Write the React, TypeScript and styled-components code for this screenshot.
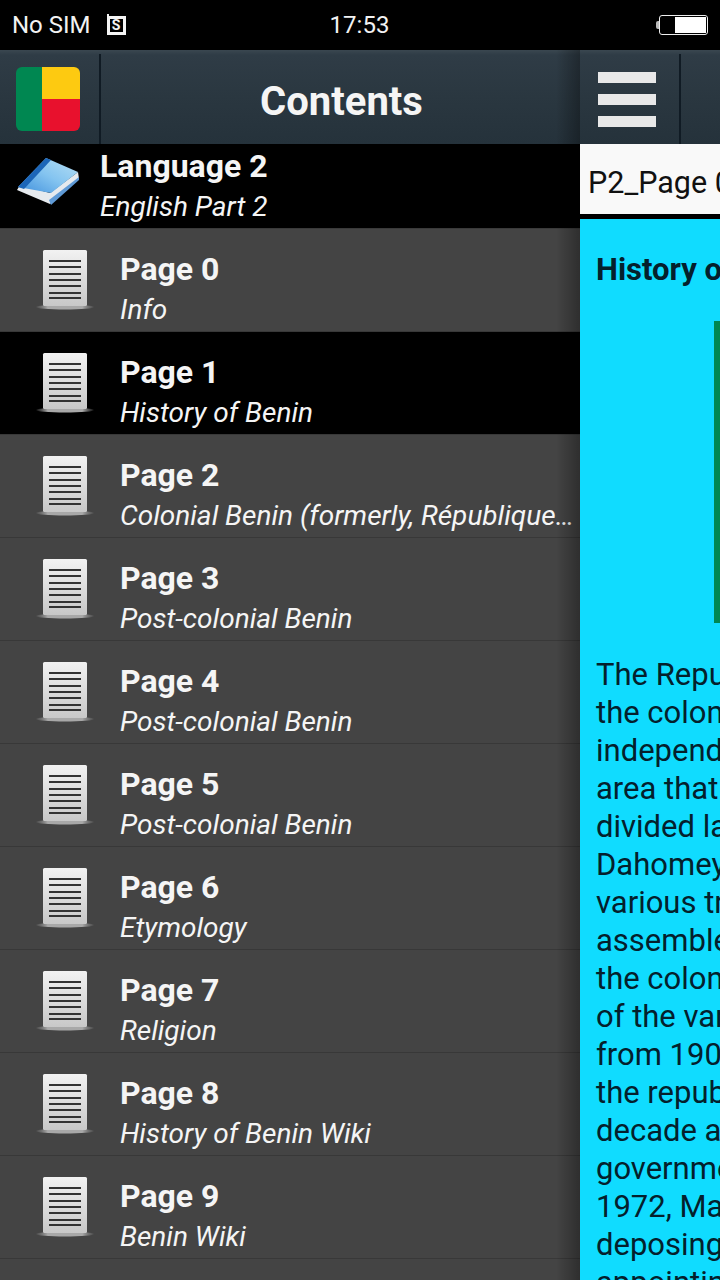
import React from 'react';
import styled, { createGlobalStyle } from 'styled-components';

const PAGES = [
  { title: 'Page 0', sub: 'Info' },
  { title: 'Page 1', sub: 'History of Benin', active: true },
  { title: 'Page 2', sub: 'Colonial Benin (formerly, République du Dahomey)' },
  { title: 'Page 3', sub: 'Post-colonial Benin' },
  { title: 'Page 4', sub: 'Post-colonial Benin' },
  { title: 'Page 5', sub: 'Post-colonial Benin' },
  { title: 'Page 6', sub: 'Etymology' },
  { title: 'Page 7', sub: 'Religion' },
  { title: 'Page 8', sub: 'History of Benin Wiki' },
  { title: 'Page 9', sub: 'Benin Wiki' },
];

const ARTICLE_LINES = [
  'The Republic of Benin',
  'the colonial era and',
  'independence of the',
  'area that is now',
  'divided lands of',
  'Dahomey and the',
  'various tribes were',
  'assembled during',
  'the colonial period',
  'of the various areas',
  'from 1904 until',
  'the republic in the',
  'decade after the',
  'government until',
  '1972, Mathieu Kerekou',
  'deposing the rulers',
  'appointing himself',
];

const DocIcon = () => (
  <svg width="58" height="60" viewBox="0 0 58 60">
    <defs>
      <linearGradient id="docPaper" x1="0" y1="0" x2="0" y2="1">
        <stop offset="0" stopColor="#f2f2f2" />
        <stop offset="1" stopColor="#c8c8c8" />
      </linearGradient>
      <linearGradient id="docShadow" x1="0" y1="0" x2="1" y2="0">
        <stop offset="0" stopColor="#8a8a8a" stopOpacity="0.1" />
        <stop offset="0.2" stopColor="#a8a8a8" />
        <stop offset="0.8" stopColor="#a8a8a8" />
        <stop offset="1" stopColor="#8a8a8a" stopOpacity="0.1" />
      </linearGradient>
    </defs>
    <ellipse cx="29" cy="57" rx="29" ry="2.5" fill="url(#docShadow)" />
    <rect x="7" y="0" width="44" height="56" rx="1.5" fill="url(#docPaper)" />
    {[10, 16, 23, 29, 35, 42, 47].map(y => (
      <rect key={y} x="13" y={y} width="32" height="2" fill="#333" />
    ))}
  </svg>
);

const BookIcon = () => (
  <svg width="64" height="50" viewBox="0 0 64 50">
    <defs>
      <linearGradient id="bookCover" x1="0" y1="1" x2="1" y2="0">
        <stop offset="0" stopColor="#3f8fdc" />
        <stop offset="0.5" stopColor="#84c4f0" />
        <stop offset="1" stopColor="#b8e0f4" />
      </linearGradient>
    </defs>
    <path d="M0 33 L33 47 L62 22 L61 15 L33 36 L3 28 Z" fill="#e6eaee" />
    <path d="M32 43 L62 20 L62 23 L34 48 Z" fill="#5f9ad6" />
    <path d="M1 30 L29 1 L61 15 L34 36 Z" fill="url(#bookCover)" />
    <path d="M1 30 L29 1 L34 3 L7 32 Z" fill="#1c66b8" />
  </svg>
);

const FlagIcon = () => (
  <FlagFrame>
    <FlagHoist />
    <FlagFly>
      <FlagStripe $color="#fdca11" />
      <FlagStripe $color="#e8112d" />
    </FlagFly>
  </FlagFrame>
);

export default function App() {
  return (
    <Screen>
      <GlobalStyle />
      <StatusBar>
        <Carrier>
          No SIM
          <SimBadge>S</SimBadge>
        </Carrier>
        <Clock>17:53</Clock>
        <Battery>
          <BatteryLevel />
        </Battery>
      </StatusBar>
      <Body>
        <Drawer>
          <DrawerHeader>
            <FlagCell>
              <FlagIcon />
            </FlagCell>
            <DrawerTitle>Contents</DrawerTitle>
          </DrawerHeader>
          <LanguageRow>
            <LanguageIcon>
              <BookIcon />
            </LanguageIcon>
            <RowText>
              <RowTitle>Language 2</RowTitle>
              <RowSub>English Part 2</RowSub>
            </RowText>
          </LanguageRow>
          {PAGES.map(page => (
            <PageRow key={page.title} $active={page.active}>
              <PageIcon>
                <DocIcon />
              </PageIcon>
              <PageText>
                <RowTitle>{page.title}</RowTitle>
                <RowSub>{page.sub}</RowSub>
              </PageText>
            </PageRow>
          ))}
          <DrawerEdge />
        </Drawer>
        <Main>
          <MainHeader>
            <MenuCell>
              <MenuBar />
              <MenuBar />
              <MenuBar />
            </MenuCell>
          </MainHeader>
          <TabStrip>P2_Page 0</TabStrip>
          <Article>
            <ArticleHeading>History of Benin</ArticleHeading>
            <ArticleImage />
            <ArticleText>
              {ARTICLE_LINES.map(line => (
                <ArticleLine key={line}>{line}</ArticleLine>
              ))}
            </ArticleText>
          </Article>
        </Main>
      </Body>
    </Screen>
  );
}

const GlobalStyle = createGlobalStyle`
  html, body {
    margin: 0;
    padding: 0;
    background: #000;
  }
  * {
    box-sizing: border-box;
  }
`;

const Screen = styled.div`
  width: 720px;
  height: 1280px;
  overflow: hidden;
  display: flex;
  flex-direction: column;
  background: #000;
  font-family: Roboto, 'Liberation Sans', sans-serif;
  color: #fff;
`;

const StatusBar = styled.div`
  height: 50px;
  flex: none;
  display: grid;
  grid-template-columns: 1fr auto 1fr;
  align-items: center;
  padding: 0 12px;
  background: #000;
  font-size: 24px;
  color: #f2f2f2;
`;

const Carrier = styled.div`
  display: flex;
  align-items: center;
  gap: 16px;
`;

const SimBadge = styled.span`
  position: relative;
  width: 19px;
  height: 19px;
  border: 3px solid #f4f4f4;
  font-size: 14px;
  font-weight: 700;
  line-height: 13px;
  text-align: center;

  &::before {
    content: '';
    position: absolute;
    top: -5px;
    left: -3px;
    width: 2px;
    height: 3px;
    background: #f4f4f4;
  }
`;

const Clock = styled.div`
  text-align: center;
  margin-left: -1px;
`;

const Battery = styled.div`
  position: relative;
  justify-self: end;
  width: 49px;
  height: 20px;
  border: 1px solid #eee;
  border-radius: 3px;
  display: flex;
  justify-content: flex-end;
  padding: 1px;

  &::before {
    content: '';
    position: absolute;
    top: 5px;
    left: -4px;
    width: 3px;
    height: 8px;
    border-radius: 2px 0 0 2px;
    background: #bbb;
  }
`;

const BatteryLevel = styled.div`
  width: 31px;
  background: #fff;
`;

const Body = styled.div`
  flex: 1;
  display: flex;
  min-height: 0;
`;

const Drawer = styled.div`
  position: relative;
  width: 580px;
  flex: none;
  background: #444;
  overflow: hidden;
`;

const DrawerEdge = styled.div`
  position: absolute;
  top: 0;
  right: 0;
  bottom: 0;
  width: 24px;
  background: linear-gradient(to right, rgba(0, 0, 0, 0), rgba(0, 0, 0, 0.32));
`;

const barBackground = 'linear-gradient(to bottom, #3a4750 0, #2f3c46 5px, #2a3740 50%, #25323b 100%)';

const DrawerHeader = styled.div`
  height: 94px;
  display: flex;
  align-items: stretch;
  background: ${barBackground};
`;

const FlagCell = styled.div`
  width: 101px;
  flex: none;
  display: flex;
  align-items: center;
  padding-left: 16px;
  margin-top: 4px;
  border-right: 2px solid #101b24;
`;

const FlagFrame = styled.div`
  width: 64px;
  height: 64px;
  display: flex;
  border-radius: 6px;
  overflow: hidden;
`;

const FlagHoist = styled.div`
  width: 26px;
  background: #008751;
`;

const FlagFly = styled.div`
  flex: 1;
  display: flex;
  flex-direction: column;
`;

const FlagStripe = styled.div<{ $color: string }>`
  flex: 1;
  background: ${({ $color }) => $color};
`;

const DrawerTitle = styled.div`
  flex: 1;
  display: flex;
  align-items: center;
  justify-content: center;
  padding: 8px 0 0 2px;
  font-size: 40px;
  font-weight: 700;
  color: #f5f5f5;
`;

const LanguageRow = styled.div`
  height: 85px;
  display: flex;
  align-items: center;
  background: #000;
  border-bottom: 1px solid #3a3a3a;
`;

const LanguageIcon = styled.div`
  width: 100px;
  flex: none;
  display: flex;
  justify-content: center;
  padding-right: 2px;
  padding-bottom: 9px;
`;

const PageRow = styled.div<{ $active?: boolean }>`
  height: 103px;
  display: flex;
  align-items: center;
  background: ${({ $active }) => ($active ? '#000' : '#444')};
  border-bottom: 1px solid #383838;
`;

const PageIcon = styled.div`
  width: 120px;
  flex: none;
  display: flex;
  justify-content: center;
  padding-left: 10px;
`;

const RowText = styled.div`
  flex: 1;
  min-width: 0;
  display: flex;
  flex-direction: column;
  padding-right: 4px;
`;

const PageText = styled(RowText)`
  padding-top: 19px;
`;

const RowTitle = styled.div`
  margin-bottom: 1px;
  font-size: 32px;
  font-weight: 700;
  line-height: 40px;
  color: #f5f5f5;
`;

const RowSub = styled.div`
  font-size: 28px;
  font-style: italic;
  line-height: 40px;
  color: #f5f5f5;
  white-space: nowrap;
  overflow: hidden;
  text-overflow: ellipsis;
`;

const Main = styled.div`
  flex: 1;
  min-width: 0;
  display: flex;
  flex-direction: column;
  overflow: hidden;
`;

const MainHeader = styled.div`
  height: 94px;
  flex: none;
  display: flex;
  background: ${barBackground};
`;

const MenuCell = styled.div`
  width: 101px;
  flex: none;
  display: flex;
  flex-direction: column;
  justify-content: center;
  gap: 11px;
  padding-left: 18px;
  margin-top: 4px;
  border-right: 2px solid #101b24;
`;

const MenuBar = styled.div`
  width: 58px;
  height: 11px;
  background: #e8e8e8;
`;

const TabStrip = styled.div`
  height: 75px;
  flex: none;
  padding: 19px 0 0 8px;
  background: #f9f9f9;
  border-bottom: 5px solid #000;
  font-size: 30.5px;
  line-height: 40px;
  color: #111;
  white-space: nowrap;
  overflow: hidden;
`;

const Article = styled.div`
  flex: 1;
  min-height: 0;
  padding: 31px 0 0 16px;
  background: #10dcff;
  color: #04202c;
  overflow: hidden;
`;

const ArticleHeading = styled.div`
  font-size: 31px;
  font-weight: 700;
  line-height: 40px;
  white-space: nowrap;
`;

const ArticleImage = styled.div`
  width: 6px;
  height: 302px;
  margin: 31px 0 33px 118px;
  background: #008751;
`;

const ArticleText = styled.div`
  font-size: 31px;
  line-height: 38px;
`;

const ArticleLine = styled.div`
  white-space: nowrap;
`;
